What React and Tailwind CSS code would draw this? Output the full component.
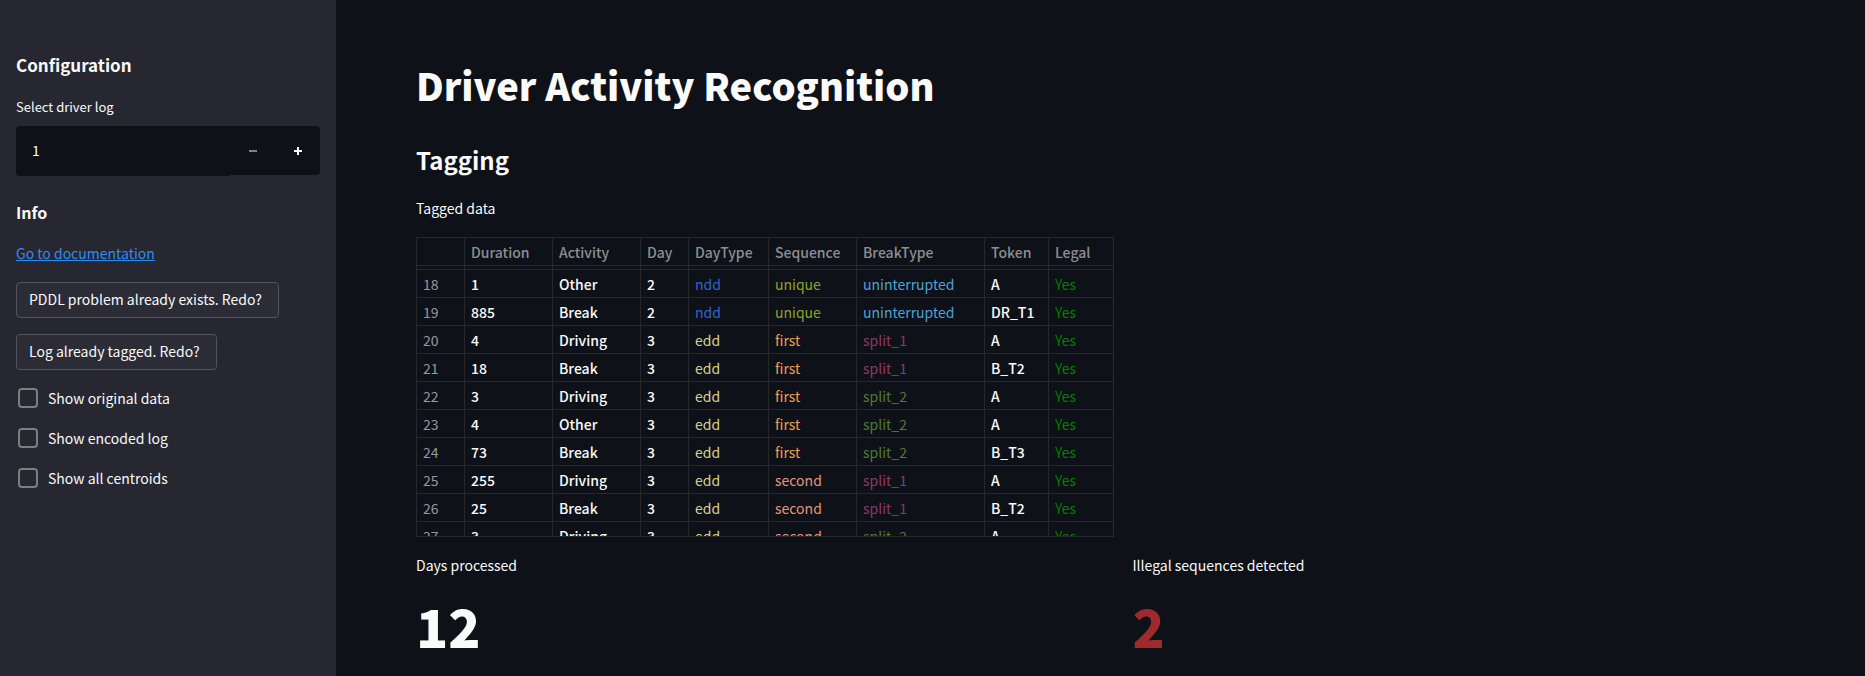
import { useState } from "react";

const COLUMNS = [
  { name: "", width: "w-12" },
  { name: "Duration", width: "w-[88px]" },
  { name: "Activity", width: "w-[88px]" },
  { name: "Day", width: "w-12" },
  { name: "DayType", width: "w-20" },
  { name: "Sequence", width: "w-[88px]" },
  { name: "BreakType", width: "w-32" },
  { name: "Token", width: "w-16" },
  { name: "Legal", width: "w-16" },
];

const ROWS = [
  [18, 1, "Other", 2, "ndd", "unique", "uninterrupted", "A", "Yes"],
  [19, 885, "Break", 2, "ndd", "unique", "uninterrupted", "DR_T1", "Yes"],
  [20, 4, "Driving", 3, "edd", "first", "split_1", "A", "Yes"],
  [21, 18, "Break", 3, "edd", "first", "split_1", "B_T2", "Yes"],
  [22, 3, "Driving", 3, "edd", "first", "split_2", "A", "Yes"],
  [23, 4, "Other", 3, "edd", "first", "split_2", "A", "Yes"],
  [24, 73, "Break", 3, "edd", "first", "split_2", "B_T3", "Yes"],
  [25, 255, "Driving", 3, "edd", "second", "split_1", "A", "Yes"],
  [26, 25, "Break", 3, "edd", "second", "split_1", "B_T2", "Yes"],
  [27, 3, "Driving", 3, "edd", "second", "split_2", "A", "Yes"],
];

const TAG_COLORS = {
  ndd: "text-[#2f66d0]",
  edd: "text-[#d9d08f]",
  unique: "text-[#8ba32b]",
  first: "text-[#f0a04b]",
  second: "text-[#e9967a]",
  uninterrupted: "text-[#4ba3d8]",
  split_1: "text-[#8b3a6b]",
  split_2: "text-[#4f7a35]",
  Yes: "text-[#008000]",
};

function cellStyle(value, column) {
  if (column === 0) return "text-[#97989c]";
  return TAG_COLORS[value] || "font-medium text-[#fafafa]";
}

function TaggedTable() {
  return (
    <div className="h-[300px] w-fit overflow-hidden border border-[#26282c]">
      <table className="w-[696px] table-fixed border-separate border-spacing-0 text-left text-[14px] leading-5">
        <thead>
          <tr>
            {COLUMNS.map((c) => (
              <th
                key={c.name}
                scope="col"
                className={`${c.width} h-7 border-r border-b border-[#26282c] p-0 pl-1.5 font-medium text-[#8c8e92] last:border-r-0`}
              >
                {c.name}
              </th>
            ))}
          </tr>
        </thead>
        <tbody>
          <tr aria-hidden="true">
            {COLUMNS.map((c) => (
              <td
                key={c.name}
                className="h-1 border-r border-b border-[#26282c] p-0 last:border-r-0"
              />
            ))}
          </tr>
          {ROWS.map((row) => (
            <tr key={row[0]}>
              {row.map((value, i) => (
                <td
                  key={i}
                  className={`h-7 border-r border-b border-[#26282c] p-0 pl-1.5 last:border-r-0 ${cellStyle(value, i)}`}
                >
                  {value}
                </td>
              ))}
            </tr>
          ))}
        </tbody>
      </table>
    </div>
  );
}

function ActionButton({ children }) {
  return (
    <button
      type="button"
      className="h-9 rounded border border-[#52535b] bg-[#2b2c36] pr-4 pb-0.5 pl-3 text-[14px] leading-6"
    >
      {children}
    </button>
  );
}

function Check({ id, label }) {
  return (
    <div className="flex h-6 items-center gap-2.5 pl-0.5">
      <input
        id={id}
        type="checkbox"
        className="size-5 appearance-none rounded border-2 border-[#7d7e84] checked:bg-[#ff4b4b]"
      />
      <label htmlFor={id} className="text-[14px] leading-6">
        {label}
      </label>
    </div>
  );
}

function Sidebar() {
  const [log, setLog] = useState(1);
  return (
    <aside className="w-84 shrink-0 bg-[#262730] px-4 pt-[51px]">
      <h2 className="text-[17px] leading-7 font-bold">Configuration</h2>
      <label htmlFor="driver-log" className="mt-4 block text-[13px] leading-6">
        Select driver log
      </label>
      <div className="mt-[7px] flex items-start">
        <input
          id="driver-log"
          type="text"
          inputMode="numeric"
          value={log}
          onChange={(e) => setLog(Number(e.target.value) || 1)}
          className="h-[50px] min-w-0 flex-1 rounded-l bg-[#0e1117] px-4 pb-0.5 text-[14px] outline-none"
        />
        <div className="flex h-[49px] rounded-r bg-[#0e1117]">
          <button
            type="button"
            aria-label="Decrease"
            onClick={() => setLog(Math.max(1, log - 1))}
            className="flex w-[45px] items-center justify-center text-[#7f8190]"
          >
            <svg viewBox="0 0 8 8" className="size-2" fill="currentColor">
              <path d="M0 3h8v2H0z" />
            </svg>
          </button>
          <button
            type="button"
            aria-label="Increase"
            onClick={() => setLog(log + 1)}
            className="flex w-[45px] items-center justify-center"
          >
            <svg viewBox="0 0 8 8" className="size-2" fill="currentColor">
              <path d="M3 0h2v3h3v2H5v3H3V5H0V3h3z" />
            </svg>
          </button>
        </div>
      </div>
      <h3 className="mt-6 text-[16px] leading-6 font-bold">Info</h3>
      <a
        href="#documentation"
        className="mt-[17px] block w-fit text-[14px] leading-6 text-[#2e8df5] underline"
      >
        Go to documentation
      </a>
      <div className="mt-[17px] flex flex-col items-start gap-4">
        <ActionButton>PDDL problem already exists. Redo?</ActionButton>
        <ActionButton>Log already tagged. Redo?</ActionButton>
        <div className="flex flex-col gap-4">
          <Check id="original" label="Show original data" />
          <Check id="encoded" label="Show encoded log" />
          <Check id="centroids" label="Show all centroids" />
        </div>
      </div>
    </aside>
  );
}

function Metric({ label, value, tone }) {
  return (
    <section>
      <p className="text-[14px] leading-6">{label}</p>
      <p className={`mt-3.5 text-[53px] leading-[68px] font-black ${tone}`}>{value}</p>
    </section>
  );
}

export default function App() {
  return (
    <div className="flex min-h-screen bg-[#0e1117] font-['Noto_Sans_CJK_SC',sans-serif] text-[#fafafa]">
      <Sidebar />
      <main className="min-w-0 flex-1 px-20 pt-[59px]">
        <h1 className="text-[38px] leading-[52px] font-black">Driver Activity Recognition</h1>
        <h2 className="mt-[33px] text-[24px] leading-8 font-bold">Tagging</h2>
        <p className="mt-5 text-[14px] leading-6">Tagged data</p>
        <div className="mt-[17px]">
          <TaggedTable />
        </div>
        <div className="mt-4 grid grid-cols-2 gap-16">
          <Metric label="Days processed" value="12" tone="text-[#fafafa]" />
          <Metric label="Illegal sequences detected" value="2" tone="text-[#9f2a2b]" />
        </div>
      </main>
    </div>
  );
}
